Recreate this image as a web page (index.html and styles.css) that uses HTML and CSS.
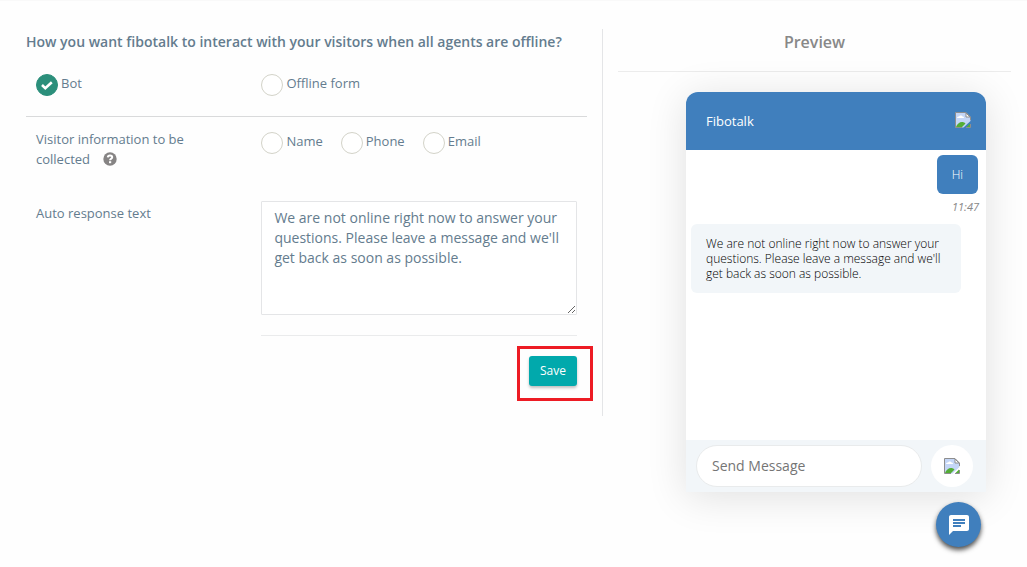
FILE: index.html
```html
<!DOCTYPE html>
<html lang="en">
<head>
    <meta charset="UTF-8">
    <meta name="viewport" content="width=device-width, initial-scale=1.0">
    <title>Offline settings</title>
    <link rel="stylesheet" href="styles.css">
</head>
<body>
    <main class="page">
        <form class="settings">
            <h1>How you want fibotalk to interact with your visitors when all agents are offline?</h1>

            <div class="form-row mode-row">
                <label class="option"><input type="radio" name="mode" value="bot" checked><span>Bot</span></label>
                <label class="option"><input type="radio" name="mode" value="form"><span>Offline form</span></label>
            </div>

            <div class="form-row info-row">
                <div class="row-label">Visitor information to be collected
                    <svg class="help-icon" viewBox="0 0 14 14" role="img" aria-label="Help">
                        <circle cx="7" cy="7" r="6.7" fill="#868484"/>
                        <path d="M4.8 5.300C4.900 4 5.800 3.400 7 3.400c1.300 0 2.200.7 2.200 1.800 0 1.500-2.100 1.600-2.100 3" fill="none" stroke="#fff" stroke-width="2"/>
                        <rect x="6" y="9.200" width="2.200" height="2" fill="#fff"/>
                    </svg>
                </div>
                <div class="options">
                    <label class="option"><input type="checkbox" name="name"><span>Name</span></label>
                    <label class="option"><input type="checkbox" name="phone"><span>Phone</span></label>
                    <label class="option"><input type="checkbox" name="email"><span>Email</span></label>
                </div>
            </div>

            <div class="form-row response-row">
                <label class="row-label" for="response">Auto response text</label>
                <div class="response">
                    <textarea id="response" name="response">We are not online right now to answer your questions. Please leave a message and we'll get back as soon as possible.</textarea>
                    <div class="actions">
                        <div class="save-wrap">
                            <button type="submit" class="btn">Save</button>
                        </div>
                    </div>
                </div>
            </div>
        </form>

        <section class="preview">
            <h2>Preview</h2>
            <div class="chat">
                <div class="chat-header">
                    <span>Fibotalk</span>
                    <button type="button" class="icon-btn" aria-label="Close chat">
                        <svg class="broken-img" viewBox="0 0 16 16">
                            <path d="M.5.5h10.500l4.500 4.500v4L8.500 15.500h-8z" fill="#c4d6f7"/>
                            <path d="M2 6c0-1.500 1.500-1.500 2-1.500C4.500 3 7 3 7.500 4.500c1 0 1.500.5 1.500 1.500z" fill="#fff"/>
                            <path d="M1 15c1-3 3.500-5 6-5 1.500 0 2.500.5 3.500 1.500L7 15zM11.500 15l3.500-3.500V15z" fill="#54ad36"/>
                            <path d="M7 15.500H.5V.5h10.500l4.500 4.500v3M15.500 12v3.500H11" fill="none" stroke="#8e8e8e"/>
                            <path d="M11 1v4h4z" fill="#fff" stroke="#8e8e8e"/>
                        </svg>
                    </button>
                </div>
                <div class="chat-body">
                    <p class="bubble sent">Hi</p>
                    <time class="sent-time">11:47</time>
                    <p class="bubble received">We are not online right now to answer your questions. Please leave a message and we'll get back as soon as possible.</p>
                </div>
                <div class="chat-footer">
                    <input type="text" placeholder="Send Message" aria-label="Send Message">
                    <button type="button" class="icon-btn send-btn" aria-label="Send">
                        <svg class="broken-img" viewBox="0 0 16 16">
                            <path d="M.5.5h10.500l4.500 4.500v4L8.500 15.500h-8z" fill="#c4d6f7"/>
                            <path d="M2 6c0-1.500 1.500-1.500 2-1.500C4.500 3 7 3 7.500 4.500c1 0 1.500.5 1.500 1.500z" fill="#fff"/>
                            <path d="M1 15c1-3 3.500-5 6-5 1.500 0 2.500.5 3.500 1.500L7 15zM11.500 15l3.500-3.500V15z" fill="#54ad36"/>
                            <path d="M7 15.500H.5V.5h10.500l4.500 4.500v3M15.500 12v3.500H11" fill="none" stroke="#8e8e8e"/>
                            <path d="M11 1v4h4z" fill="#fff" stroke="#8e8e8e"/>
                        </svg>
                    </button>
                </div>
            </div>
            <button type="button" class="launcher" aria-label="Open chat">
                <svg viewBox="0 0 24 24">
                    <path d="M20 2H4c-1.100 0-2 .9-2 2v18l4-4h14c1.100 0 2-.9 2-2V4c0-1.100-.9-2-2-2zM6 6h12v2H6zm8 8H6v-2h8zm4-3H6V9h12z" fill="#fff"/>
                </svg>
            </button>
        </section>
    </main>
</body>
</html>
```
FILE: styles.css
```css
* {
    box-sizing: border-box;
}

body {
    margin: 0;
    border-top: 1px solid #f9f9f9;
    background-color: #fefefe;
    color: #647c8e;
    font-family: "Open Sans", sans-serif;
    font-size: 13px;
    line-height: 20px;
}

h1,
h2,
p {
    margin: 0;
}

button,
input,
textarea {
    font-family: inherit;
}

.page {
    display: grid;
    grid-template-columns: 577fr 393fr;
    gap: 15px;
    align-items: start;
    padding: 28px 16px 16px 26px;
}

/* settings form */
.settings {
    padding-right: 15px;
    border-right: 1px solid #e4e5e7;
}

h1 {
    padding-top: 3px;
    font-size: 14px;
    font-weight: 600;
}

.form-row {
    display: grid;
    grid-template-columns: 5fr 7fr;
    padding: 0 10px;
}

.mode-row {
    padding-top: 22px;
    padding-bottom: 20px;
    border-bottom: 1px solid #d9dadb;
}

.info-row {
    padding-top: 12px;
}

.row-label {
    padding-right: 64px;
}

.options {
    display: flex;
    gap: 18px;
    padding-top: 3px;
}

.option {
    display: flex;
    gap: 3px;
    line-height: 18px;
    cursor: pointer;
}

.option input {
    appearance: none;
    flex: none;
    width: 22px;
    height: 22px;
    margin: 0;
    border: 1px solid #d3d3c9;
    border-radius: 50%;
    background-color: #fff;
}

.option input:checked {
    border-color: #2b8f7b;
    background: #2b8f7b url("data:image/svg+xml,%3Csvg xmlns='http://www.w3.org/2000/svg' viewBox='0 0 20 20'%3E%3Cpath d='M5 10l3.300 3.200 6.500-6' fill='none' stroke='white' stroke-width='2.600'/%3E%3C/svg%3E") center / 20px no-repeat;
}

.help-icon {
    width: 14px;
    height: 14px;
    margin-left: 10px;
    vertical-align: -2px;
}

.response-row {
    padding-top: 32px;
}

.response-row .row-label {
    padding-top: 2px;
}

textarea {
    display: block;
    width: 100%;
    height: 114px;
    padding: 6px 12px;
    border: 1px solid #e4e5e7;
    border-radius: 1px;
    background-color: #fff;
    color: #647c8e;
    font-size: 14px;
    line-height: 20px;
}

.actions {
    display: flex;
    justify-content: flex-end;
    margin-top: 20px;
    padding: 20px 0 30px;
    border-top: 1px solid #eaebec;
}

.save-wrap {
    position: relative;
}

/* red marker around the button */
.save-wrap::after {
    content: "";
    position: absolute;
    inset: -10px -16px -15px -12px;
    border: 3px solid #ed1c24;
    pointer-events: none;
}

.btn {
    display: block;
    height: 30px;
    padding: 0 11px 2px;
    border: none;
    border-radius: 3px;
    background-color: #01a9ac;
    box-shadow: 0 2px 3px rgba(0, 0, 0, 0.25);
    color: #fff;
    font-size: 12px;
    cursor: pointer;
}

/* chat preview */
.preview {
    display: flex;
    flex-direction: column;
    align-items: flex-end;
}

h2 {
    width: 100%;
    padding: 3px 0 19px;
    border-bottom: 1px solid #ececec;
    color: #888;
    font-size: 16px;
    font-weight: 600;
    text-align: center;
}

.chat {
    width: 300px;
    margin: 20px 25px 10px;
    border-radius: 12px 12px 0 0;
    background-color: #fff;
    box-shadow: 0 5px 40px rgba(0, 0, 0, 0.12);
}

.chat-header {
    display: flex;
    justify-content: space-between;
    align-items: center;
    height: 58px;
    padding: 0 15px 0 20px;
    border-radius: 12px 12px 0 0;
    background-color: #407fbd;
    color: #fff;
}

.icon-btn {
    display: flex;
    justify-content: center;
    align-items: center;
    padding: 0;
    border: none;
    background: none;
    cursor: pointer;
}

.chat-header .icon-btn {
    padding-bottom: 2px;
}

.broken-img {
    width: 16px;
    height: 16px;
}

.chat-body {
    display: flex;
    flex-direction: column;
    align-items: flex-start;
    min-height: 290px;
    padding: 5px;
}

.bubble {
    border-radius: 6px;
    font-size: 12px;
    font-weight: 300;
    line-height: 15px;
}

.sent {
    align-self: flex-end;
    margin-right: 3px;
    padding: 12px 15px;
    background-color: #407fbd;
    color: #fff;
}

.sent-time {
    align-self: flex-end;
    margin: 3px 2px 7px;
    color: #888;
    font-size: 11px;
    font-style: italic;
}

.received {
    width: 270px;
    padding: 12px 15px;
    background-color: #f2f6f9;
    color: #000;
}

.chat-footer {
    display: flex;
    gap: 9px;
    padding: 5px 13px 5px 10px;
    background-color: #f2f6f9;
}

.chat-footer input {
    flex: 1;
    min-width: 0;
    height: 42px;
    padding: 0 15px 2px;
    border: 1px solid #e9ebec;
    border-radius: 21px;
    background-color: #fff;
    font-size: 14px;
}

.chat-footer input::placeholder {
    color: #757575;
}

.send-btn {
    width: 42px;
    height: 42px;
    border-radius: 50%;
    background-color: #fff;
}

.launcher {
    display: flex;
    justify-content: center;
    align-items: center;
    width: 45px;
    height: 45px;
    margin-right: 30px;
    padding: 0;
    border: none;
    border-radius: 50%;
    background-color: #407fbd;
    box-shadow: 0 3px 5px rgba(0, 0, 0, 0.7);
    cursor: pointer;
}

.launcher svg {
    width: 24px;
    height: 24px;
}
```
